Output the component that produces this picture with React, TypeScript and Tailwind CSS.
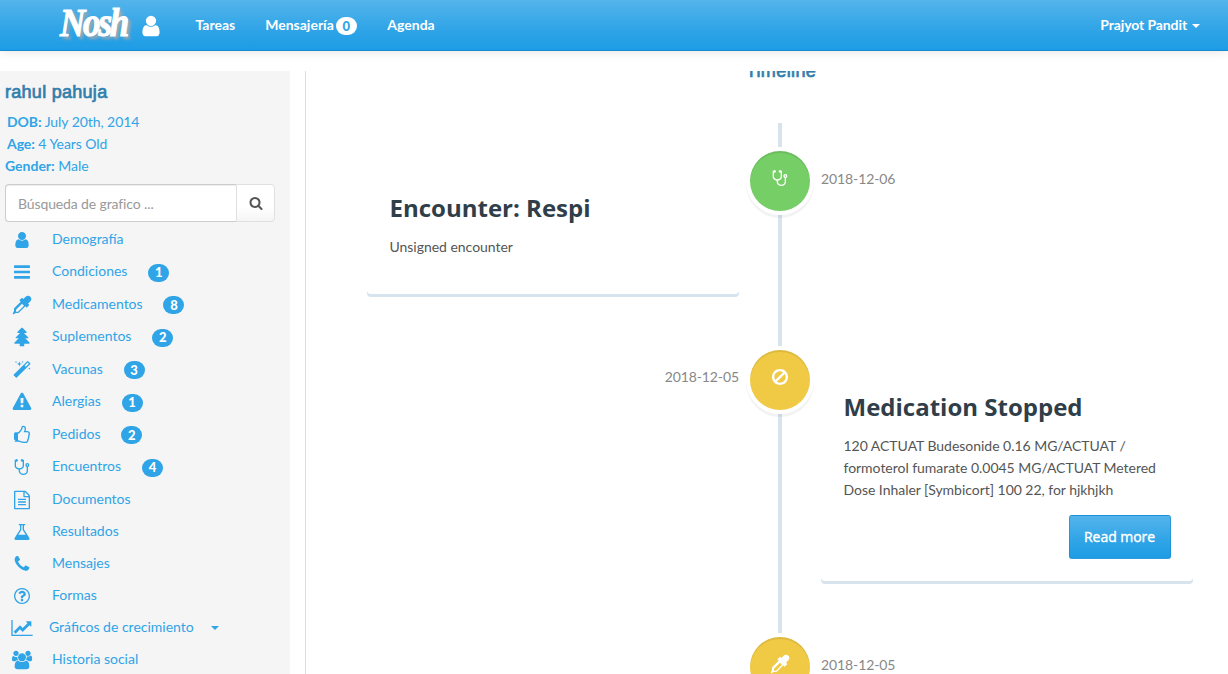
import React from 'react';

const ICONS = {
  user: 'M1536 1399q0 109-62.5 187t-150.5 78h-854q-88 0-150.5-78t-62.5-187q0-85 8.5-160.5t31.5-152 58.5-131 94-89 134.5-34.5q131 128 313 128t313-128q76 0 134.5 34.5t94 89 58.5 131 31.5 152 8.5 160.5zm-256-887q0 159-112.5 271.5t-271.5 112.5-271.5-112.5-112.5-271.5 112.5-271.5 271.5-112.5 271.5 112.5 112.5 271.5z',
  bars: 'M1664 1344v128q0 26-19 45t-45 19h-1408q-26 0-45-19t-19-45v-128q0-26 19-45t45-19h1408q26 0 45 19t19 45zm0-512v128q0 26-19 45t-45 19h-1408q-26 0-45-19t-19-45v-128q0-26 19-45t45-19h1408q26 0 45 19t19 45zm0-512v128q0 26-19 45t-45 19h-1408q-26 0-45-19t-19-45v-128q0-26 19-45t45-19h1408q26 0 45 19t19 45z',
  dropper: 'M1698 94q94 94 94 226.5t-94 225.5l-225 223 104 104q10 10 10 23t-10 23l-210 210q-10 10-23 10t-23-10l-105-105-603 603q-37 37-90 37h-203l-256 128-64-64 128-256v-203q0-53 37-90l603-603-105-105q-10-10-10-23t10-23l210-210q10-10 23-10t23 10l104 104 223-225q93-94 225.5-94t226.5 94zm-1186 1442l576-576-192-192-576 576v192h192z',
  tree: 'M1632 1472q0 26-19 45t-45 19h-462q1 17 6 87.5t5 108.5q0 25-18 42.5t-43 17.5h-320q-25 0-43-17.5t-18-42.5q0-38 5-108.5t6-87.5h-462q-26 0-45-19t-19-45 19-45l402-403h-229q-26 0-45-19t-19-45 19-45l402-403h-197q-26 0-45-19t-19-45 19-45l384-384q19-19 45-19t45 19l384 384q19 19 19 45t-19 45-45 19h-197l402 403q19 19 19 45t-19 45-45 19h-229l402 403q19 19 19 45z',
  magic: 'M1254 581l293-293-107-107-293 293zm447-293q0 27-18 45l-1286 1286q-18 18-45 18t-45-18l-198-198q-18-18-18-45t18-45l1286-1286q18-18 45-18t45 18l198 198q18 18 18 45zm-1351-190l98 30-98 30-30 98-30-98-98-30 98-30 30-98zm350 162l196 60-196 60-60 196-60-196-196-60 196-60 60-196zm930 478l98 30-98 30-30 98-30-98-98-30 98-30 30-98zm-640-640l98 30-98 30-30 98-30-98-98-30 98-30 30-98z',
  warning: 'M1024 1375v-190q0-14-9.5-23.5t-22.5-9.5h-192q-13 0-22.5 9.5t-9.5 23.5v190q0 14 9.5 23.5t22.5 9.5h192q13 0 22.5-9.5t9.5-23.5zm-2-374l18-459q0-12-10-19-13-11-24-11h-220q-11 0-24 11-10 7-10 21l17 457q0 10 10 16.5t24 6.5h185q14 0 23.5-6.5t10.5-16.5zm-14-934l768 1408q35 63-2 126-17 29-46.5 46t-63.5 17h-1536q-34 0-63.5-17t-46.5-46q-37-63-2-126l768-1408q17-31 47-49t65-18 65 18 47 49z',
  thumb: 'M256 1408q0-26-19-45t-45-19-45 19-19 45 19 45 45 19 45-19 19-45zm1280-640q0-51-39-89.5t-89-38.5h-352q0-58 48-159.5t48-160.5q0-98-32-145t-128-47q-26 26-38 85t-30.5 125.5-59.5 109.5q-22 23-77 91-4 5-23 30t-31.5 41-34.5 42.5-40 44-38.5 35.5-40 27-35.5 9h-32v640h32q13 0 31.5 3t33 6.5 38 11 35 11.5 35.5 12.5 29 10.5q211 73 342 73h121q192 0 192-167 0-26-5-56 30-16 47.5-52.5t17.5-73.5-18-69q53-50 53-119 0-25-10-55.5t-25-47.5q32-1 53.5-47t21.5-81zm128-1q0 89-49 163 9 33 9 69 0 77-38 144 3 21 3 43 0 101-60 178 1 139-85 219.5t-227 80.5h-129q-96 0-189.5-22.5t-216.5-65.5q-116-40-138-40h-288q-53 0-90.5-37.5t-37.5-90.5v-640q0-53 37.5-90.5t90.5-37.5h274q36-24 137-155 58-75 107-128 24-25 35.5-85.5t30.5-126.5 62-108q39-37 90-37 84 0 151 32.5t102 101.5 35 186q0 93-48 192h176q104 0 180 76t76 179z',
  stethoscope: 'M1472 704q0-26-19-45t-45-19-45 19-19 45 19 45 45 19 45-19 19-45zm128 0q0 62-35.5 111t-92.5 70v395q0 159-131.5 271.5t-316.5 112.5-316.5-112.5-131.5-271.5v-132q-164-20-274-128.5t-110-252.5v-512q0-26 19-45t45-19q6 0 16 2 17-30 47-48t65-18q53 0 90.5 37.5t37.5 90.5-37.5 90.5-90.5 37.5q-33 0-64-18v402q0 106 94 181t226 75 226-75 94-181v-402q-31 18-64 18-53 0-90.5-37.5t-37.5-90.5 37.5-90.5 90.5-37.5q35 0 65 18t47 48q10-2 16-2 26 0 45 19t19 45v512q0 144-110 252.5t-274 128.5v132q0 106 94 181t226 75 226-75 94-181v-395q-57-21-92.5-70t-35.5-111q0-80 56-136t136-56 136 56 56 136z',
  file: 'M1596 380q28 28 48 76t20 88v1152q0 40-28 68t-68 28h-1344q-40 0-68-28t-28-68v-1600q0-40 28-68t68-28h896q40 0 88 20t76 48zm-444-244v376h376q-10-29-22-41l-313-313q-12-12-41-22zm384 1528v-1024h-416q-40 0-68-28t-28-68v-416h-768v1536h1280zm-1024-864q0-14 9-23t23-9h704q14 0 23 9t9 23v64q0 14-9 23t-23 9h-704q-14 0-23-9t-9-23v-64zm736 224q14 0 23 9t9 23v64q0 14-9 23t-23 9h-704q-14 0-23-9t-9-23v-64q0-14 9-23t23-9h704zm0 256q14 0 23 9t9 23v64q0 14-9 23t-23 9h-704q-14 0-23-9t-9-23v-64q0-14 9-23t23-9h704z',
  flask: 'M1591 1448q56 89 21.5 152.5t-140.5 63.5h-1152q-106 0-140.5-63.5t21.5-152.5l503-793v-399h-64q-26 0-45-19t-19-45 19-45 45-19h512q26 0 45 19t19 45-19 45-45 19h-64v399zm-779-725l-272 429h712l-272-429-20-31v-436h-128v436z',
  phone: 'M1600 1240q0 27-10 70.5t-21 68.5q-21 50-122 106-94 51-186 51-27 0-52.5-3.5t-57.5-12.5-47.5-14.5-55.5-20.5-49-18q-98-35-175-83-128-79-264.5-215.5t-215.5-264.5q-48-77-83-175-3-9-18-49t-20.5-55.5-14.5-47.5-12.5-57.5-3.5-52.5q0-92 51-186 56-101 106-122 25-11 68.5-21t70.5-10q14 0 21 3 18 6 53 76 11 19 30 54t35 63.5 31 53.5q3 4 17.5 25t21.5 35.5 7 28.5q0 20-28.5 50t-62 55-62 53-28.5 46q0 9 5 22.5t8.5 20.5 14 24 11.5 19q76 137 174 235t235 174q2 1 19 11.5t24 14 20.5 8.5 22.5 5q18 0 46-28.5t53-62 55-62 50-28.5q14 0 28.5 7t35.5 21.5 25 17.5q25 15 53.5 31t63.5 35 54 30q70 35 76 53 3 7 3 21z',
  question: 'M1008 1200v160q0 14-9 23t-23 9h-160q-14 0-23-9t-9-23v-160q0-14 9-23t23-9h160q14 0 23 9t9 23zm256-496q0 50-15 90t-45.5 69-52 44-59.5 36q-32 18-46.5 28t-26 24-11.5 29v32q0 14-9 23t-23 9h-160q-14 0-23-9t-9-23v-68q0-35 10.5-64.5t24-47.5 39-35.5 41-25.5 44.5-21q53-25 75-43t22-49q0-42-43.5-71.5t-95.5-29.5q-56 0-95 27-29 20-80 83-9 12-25 12-11 0-19-6l-108-82q-10-7-12-20t5-23q122-192 349-192 129 0 238.5 89.5t109.5 214.5zm-368-448q-130 0-248.5 51t-204 136.5-136.5 204-51 248.5 51 248.5 136.5 204 204 136.5 248.5 51 248.5-51 204-136.5 136.5-204 51-248.5-51-248.5-136.5-204-204-136.5-248.5-51zm768 640q0 209-103 385.5t-279.5 279.5-385.5 103-385.5-103-279.5-279.5-103-385.5 103-385.5 279.5-279.5 385.5-103 385.5 103 279.5 279.5 103 385.5z',
  chart: 'M1920 1536v128h-2048v-1536h128v1408h1920zm-128-1248v435q0 21-19.5 29.5t-35.5-7.5l-121-121-633 633q-10 10-23 10t-23-10l-233-233-416 416-192-192 585-585q10-10 23-10t23 10l233 233 464-464-121-121q-16-16-7.5-35.5t29.5-19.5h435q14 0 23 9t9 23z',
  users: 'M529 896q-162 5-265 128h-134q-82 0-138-40.5t-56-118.5q0-353 124-353 6 0 43.5 21t97.5 42.5 119 21.5q67 0 133-23-5 37-5 66 0 159 93 293zm1071 637q0 120-73 189.5t-194 69.5h-874q-121 0-194-69.5t-73-189.5q0-53 3.5-103.5t14-109 26.5-108.5 43-97.5 62-81 85.5-53.5 111.5-20q10 0 43 21.5t73 48 107 48 135 21.5 135-21.5 107-48 73-48 43-21.5q61 0 111.5 20t85.5 53.5 62 81 43 97.5 26.5 108.5 14 109 3.5 103.5zm-1024-1277q0 106-75 181t-181 75-181-75-75-181 75-181 181-75 181 75 75 181zm704 384q0 159-112.5 271.5t-271.5 112.5-271.5-112.5-112.5-271.5 112.5-271.5 271.5-112.5 271.5 112.5 112.5 271.5zm576 225q0 78-56 118.5t-138 40.5h-134q-103-123-265-128 93-134 93-293 0-29-5-66 66 23 133 23 59 0 119-21.5t97.5-42.5 43.5-21q124 0 124 353zm-128-609q0 106-75 181t-181 75-181-75-75-181 75-181 181-75 181 75 75 181z',
  ban: 'M1440 893q0-161-87-295l-754 753q137 89 297 89 111 0 211.5-43.5t173.5-116.5 116-174.5 43-212.5zm-999 299l755-754q-135-91-300-91-148 0-273 73t-198 199-73 274q0 162 89 299zm1223-299q0 157-61 300t-163.5 246-245 164-298.5 61-298.5-61-245-164-163.5-246-61-300 61-299.5 163.5-245.5 245-164 298.5-61 298.5 61 245 164 163.5 245.5 61 299.5z',
  search: 'M1216 832q0-185-131.5-316.5t-316.5-131.5-316.5 131.5-131.5 316.5 131.5 316.5 316.5 131.5 316.5-131.5 131.5-316.5zm512 832q0 52-38 90t-90 38q-54 0-90-38l-343-342q-179 124-399 124-143 0-273.5-55.5t-225-150-150-225-55.5-273.5 55.5-273.5 150-225 225-150 273.5-55.5 273.5 55.5 225 150 150 225 55.5 273.5q0 220-124 399l343 343q37 37 37 90z',
};

type IconName = keyof typeof ICONS;

function Icon({ name, className = 'size-5', viewBox = '-64 -64 1920 1920' }: { name: IconName; className?: string; viewBox?: string }) {
  return (
    <svg viewBox={viewBox} fill="currentColor" className={`shrink-0 overflow-visible ${className}`} aria-hidden="true">
      <path d={ICONS[name]} />
    </svg>
  );
}

const MENU: { icon: IconName; label: string; count?: number; caret?: boolean }[] = [
  { icon: 'user', label: 'Demografía' },
  { icon: 'bars', label: 'Condiciones', count: 1 },
  { icon: 'dropper', label: 'Medicamentos', count: 8 },
  { icon: 'tree', label: 'Suplementos', count: 2 },
  { icon: 'magic', label: 'Vacunas', count: 3 },
  { icon: 'warning', label: 'Alergias', count: 1 },
  { icon: 'thumb', label: 'Pedidos', count: 2 },
  { icon: 'stethoscope', label: 'Encuentros', count: 4 },
  { icon: 'file', label: 'Documentos' },
  { icon: 'flask', label: 'Resultados' },
  { icon: 'phone', label: 'Mensajes' },
  { icon: 'question', label: 'Formas' },
  { icon: 'chart', label: 'Gráficos de crecimiento', caret: true },
  { icon: 'users', label: 'Historia social' },
];

function Navbar() {
  return (
    <header className="relative z-10 flex h-[51px] shrink-0 items-center border-b border-[#178acc] bg-[linear-gradient(#54b4eb,#2fa4e7_60%,#1d9ce5)] pl-[60px] pr-7 font-bold text-white shadow-[0_1px_10px_rgba(0,0,0,0.1)]">
      <span className="w-[82px] origin-[50%_74%] scale-y-[1.14] whitespace-nowrap font-['Liberation_Serif',serif] text-[35px] leading-[50px] tracking-[-2.2px] italic [-webkit-text-stroke:1px_white] [text-shadow:3px_3px_3px_#aaa]">Nosh</span>
      <Icon name="user" viewBox="0 0 1792 1792" className="-ml-[3px] mt-[2px] size-6" />
      <nav className="ml-[32.5px] flex items-center">
        <a>Tareas</a>
        <a className="ml-[30px] flex items-center gap-[2px]">
          Mensajería
          <span className="mt-[2px] flex h-[18px] w-[21px] items-center justify-center rounded-[10px] bg-white text-[13px] font-black text-[#2fa4e7]">0</span>
        </a>
        <a className="ml-[30.5px]">Agenda</a>
      </nav>
      <a className="ml-auto flex items-center gap-[5px] tracking-[-0.1px]">
        Prajyot Pandit
        <span className="mt-[2px] border-x-4 border-t-4 border-x-transparent border-t-white" />
      </a>
    </header>
  );
}

function Sidebar() {
  return (
    <aside className="w-[290px] shrink-0 bg-[#f5f5f5] text-[#2fa4e7]">
      <h4 className="ml-[5px] mt-[11px] h-5 font-['Liberation_Sans',sans-serif] text-[18px] leading-5 tracking-[0.28px] font-medium text-[#317eac] [-webkit-text-stroke:0.7px_#317eac]">rahul pahuja</h4>
      <div className="mt-[9px] pl-[7px] leading-[22px] tracking-[-0.06px]">
        <p><b>DOB:</b> July 20th, 2014</p>
        <p><b>Age:</b> 4 Years Old</p>
        <p className="-ml-[2px] tracking-normal"><b>Gender:</b> Male</p>
      </div>
      <div className="ml-[5px] mt-[7px] flex h-[38px] w-[270px]">
        <div className="flex w-[231px] items-center rounded-l border border-r-0 border-[#ccc] bg-white pl-3 pt-px tracking-[-0.12px] text-[#999] shadow-[inset_0_1px_1px_rgba(0,0,0,0.075)]">Búsqueda de grafico ...</div>
        <button className="flex w-[39px] items-center justify-center rounded-r border border-[#e0e0e0] bg-[linear-gradient(#fff_60%,#f5f5f5)] text-[#555]"><Icon name="search" viewBox="0 0 1792 1792" className="size-[14px]" /></button>
      </div>
      <ul className="mt-px">
        {MENU.map((m) => (
          <li key={m.label} className={`flex items-center ${m.count ? 'h-[32.5px]' : 'h-8'} pl-3`}>
            <Icon name={m.icon} className="mt-[2px] size-5" />
            <span className={m.caret ? 'ml-[17px]' : 'ml-[20px]'}>{m.label}</span>
            {m.count && <span className="ml-[20.8px] mt-[3px] flex h-[18px] w-[21px] items-center justify-center rounded-[10px] bg-[#2fa4e7] text-[13px] font-black text-white">{m.count}</span>}
            {m.caret && <span className="ml-[17px] mt-[2px] border-x-4 border-t-4 border-x-transparent border-t-[#2fa4e7]" />}
          </li>
        ))}
      </ul>
    </aside>
  );
}

function Marker({ icon, className }: { icon: IconName; className: string }) {
  return (
    <div className={`flex size-[60px] justify-center rounded-full pt-[17px] text-white shadow-[0_0_0_4px_#fff,inset_0_2px_0_rgba(0,0,0,0.08),0_3px_0_4px_rgba(0,0,0,0.05)] ${className}`}>
      <Icon name={icon} />
    </div>
  );
}

function Card({ title, className, children }: { title: string; className: string; children: React.ReactNode }) {
  return (
    <section className={`rounded bg-white px-[22.5px] shadow-[0_3px_0_#d7e4ed] ${className}`}>
      <h2 className="mt-[39px] font-['Open_Sans',sans-serif] text-2xl leading-9 font-bold tracking-normal text-[#303e49]">{title}</h2>
      {children}
    </section>
  );
}

function Timeline() {
  return (
    <main className="ml-[15px] flex-1 overflow-hidden border-l border-[#ddd]">
      <h4 className="-mt-[10px] h-5 w-[950px] text-center font-['Liberation_Sans',sans-serif] text-[18px] leading-5 tracking-[0.4px] font-medium text-[#317eac] [-webkit-text-stroke:0.7px_#317eac]">Timeline</h4>
      <div className="relative ml-[61px] mt-[42px] w-[826px] pt-7">
        <div className="absolute left-[411px] top-0 h-[600px] w-1 bg-[#d7e4ed]" />
        <div className="relative grid grid-cols-[372px_60px_372px] grid-rows-[199px_287px_200px] items-start gap-x-[11px] tracking-[-0.03px] text-[#555]">
          <Card title="Encounter: Respi" className="h-[143px]">
            <p className="mt-[10px] leading-[22px]">Unsigned encounter</p>
          </Card>
          <Marker icon="stethoscope" className="bg-[#75ce66]" />
          <time className="mt-[17px] leading-[22px] tracking-[-0.1px] text-[#888]">2018-12-06</time>

          <time className="mt-[16px] text-right leading-[22px] tracking-[-0.1px] text-[#888]">2018-12-05</time>
          <Marker icon="ban" className="bg-[#f0ca45]" />
          <Card title="Medication Stopped" className="h-[231px]">
            <p className="mt-[10px] leading-[22px]">120 ACTUAT Budesonide 0.16 MG/ACTUAT / formoterol fumarate 0.0045 MG/ACTUAT Metered Dose Inhaler [Symbicort] 100 22, for hjkhjkh</p>
            <button className="ml-auto mt-[14px] block h-11 w-[102px] rounded-[3px] border border-[#178acc]/60 bg-[linear-gradient(#54b4eb,#2fa4e7_60%,#1d9ce5)] font-['Open_Sans',sans-serif] text-sm font-medium tracking-[-0.05px] text-white [-webkit-text-stroke:0.4px_white]">Read more</button>
          </Card>

          <span />
          <Marker icon="dropper" className="bg-[#f0ca45]" />
          <time className="mt-[17px] leading-[22px] tracking-[-0.1px] text-[#888]">2018-12-05</time>
        </div>
      </div>
    </main>
  );
}

export default function App() {
  return (
    <div className="flex h-[674px] w-[1228px] flex-col overflow-hidden bg-white font-['Lato',sans-serif] text-sm">
      <Navbar />
      <div className="mt-5 flex min-h-0 flex-1 overflow-hidden">
        <Sidebar />
        <Timeline />
      </div>
    </div>
  );
}
